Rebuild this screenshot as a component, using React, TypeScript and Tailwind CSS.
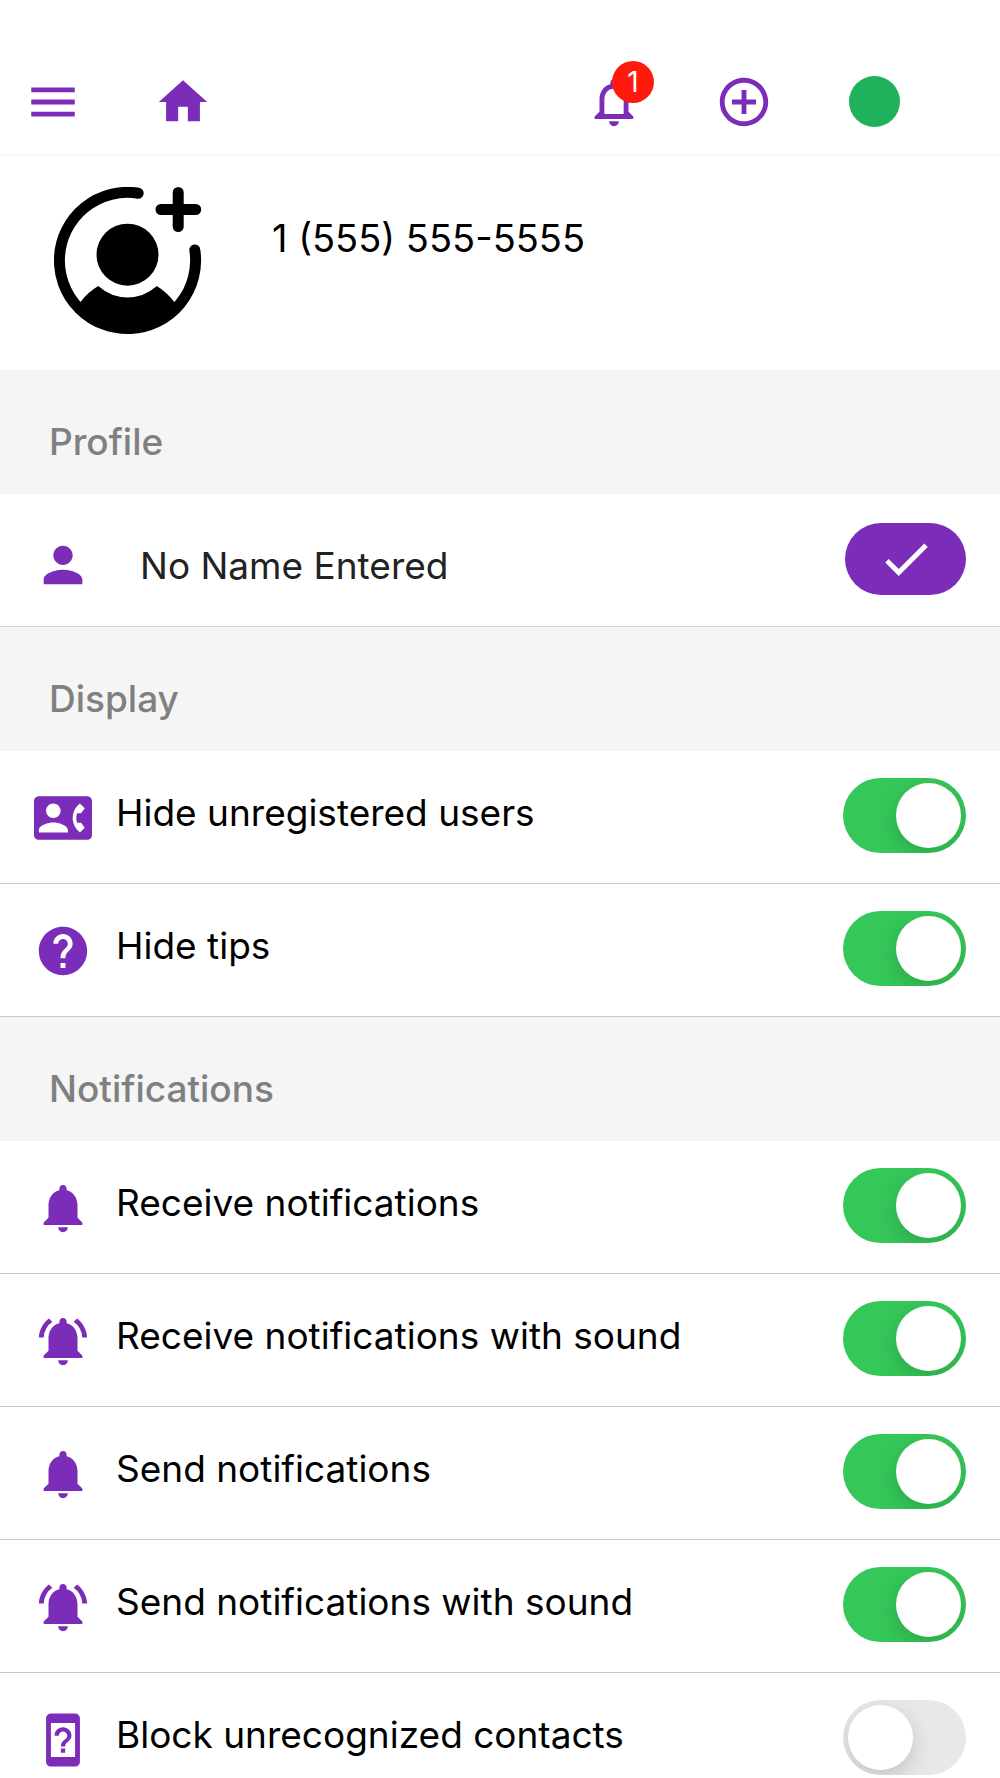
import { useState, type ReactNode } from "react";
import type { IconType } from "react-icons";
import {
  MdAddCircleOutline,
  MdCheck,
  MdContactPhone,
  MdDeviceUnknown,
  MdHelp,
  MdHome,
  MdMenu,
  MdNotifications,
  MdNotificationsActive,
  MdNotificationsNone,
  MdPerson,
} from "react-icons/md";

function AddAvatarIcon() {
  return (
    <svg viewBox="0 0 148 148" className="size-[148px]" aria-hidden="true">
      <g fill="none" stroke="#000" strokeWidth="11" strokeLinecap="round">
        <path d="M84.2 6.2A68.1 68.1 0 1 0 140.8 63" />
        <path d="M124.2 5.5v34M107 22.5h34.7" />
      </g>
      <circle cx="73.5" cy="67.7" r="31" />
      <path d="M26.5 114.9Q34 105 44.3 99Q57 110.4 73.5 110.4Q90 110.4 102.8 99Q112.5 105 120.3 114.9L124.5 118.5A68 68 0 0 1 22.5 118.5Z" />
    </svg>
  );
}

function SectionHeading({ children }: { children: ReactNode }) {
  return (
    <h2 className="flex h-[124px] items-center bg-[#f5f5f5] pt-5 pl-[49px] text-[37px] leading-[48px] font-medium text-[#808080]">
      {children}
    </h2>
  );
}

function SettingRow({ icon: Icon, label, initial }: { icon: IconType; label: string; initial: boolean }) {
  const [on, setOn] = useState(initial);
  return (
    <label className="flex h-[133px] items-center border-b border-[#c8c8cc] pr-[34px] pl-[34px]">
      <Icon className="mt-[2px] size-[58px] shrink-0 text-[#7b2cb8]" />
      <span className="ml-6 flex-1 pb-2 text-[37px] leading-[48px] text-black">{label}</span>
      <span className="relative mb-1 h-[75px] w-[123px] shrink-0">
        <input
          type="checkbox"
          role="switch"
          checked={on}
          onChange={(e) => setOn(e.target.checked)}
          className="peer block h-full w-full cursor-pointer appearance-none rounded-full bg-[#e8e8ea] checked:bg-[#35c759]"
        />
        <span className="pointer-events-none absolute inset-0 overflow-hidden rounded-full peer-checked:[&>span]:translate-x-[48px]">
          <span className="absolute top-[5px] left-[5px] size-[65px] rounded-full bg-white shadow-[0_8px_22px_rgba(0,0,0,0.16)]" />
        </span>
      </span>
    </label>
  );
}

const displaySettings = [
  { icon: MdContactPhone, label: "Hide unregistered users", initial: true },
  { icon: MdHelp, label: "Hide tips", initial: true },
];

const notificationSettings = [
  { icon: MdNotifications, label: "Receive notifications", initial: true },
  { icon: MdNotificationsActive, label: "Receive notifications with sound", initial: true },
  { icon: MdNotifications, label: "Send notifications", initial: true },
  { icon: MdNotificationsActive, label: "Send notifications with sound", initial: true },
  { icon: MdDeviceUnknown, label: "Block unrecognized contacts", initial: false },
];

export default function App() {
  return (
    <div className="flex h-screen flex-col bg-white font-['Inter','Liberation_Sans',sans-serif]">
      <header className="flex h-[156px] shrink-0 items-center justify-between border-b-2 border-[#f8f8f8] pt-[49px] pr-[97px] pl-6 text-[#7b2cb8]">
        <div className="flex gap-[72px]">
          <button type="button" aria-label="Menu">
            <MdMenu className="size-[58px]" />
          </button>
          <button type="button" aria-label="Home">
            <MdHome className="size-[58px]" />
          </button>
        </div>
        <div className="flex items-center gap-[72px]">
          <button type="button" aria-label="Alerts" className="relative">
            <MdNotificationsNone className="size-[58px]" />
            <span className="absolute -top-3 left-[27px] flex size-[42px] items-center justify-center rounded-full bg-[#ff1a0d] text-[28px] leading-none text-white">
              1
            </span>
          </button>
          <button type="button" aria-label="Add">
            <MdAddCircleOutline className="size-[58px]" />
          </button>
          <button type="button" aria-label="Status" className="flex size-[58px] items-center justify-center">
            <span className="size-[51px] rounded-full bg-[#1fb25a]" />
          </button>
        </div>
      </header>

      <main className="min-h-0 flex-1 overflow-y-auto [scrollbar-width:none]">
        <div className="flex h-[214px] items-start pt-[31px] pl-[54px]">
          <button type="button" aria-label="Add photo">
            <AddAvatarIcon />
          </button>
          <p className="mt-[27px] ml-[70px] text-[38px] leading-[48px] text-black">1 (555) 555-5555</p>
        </div>

        <SectionHeading>Profile</SectionHeading>
        <div className="flex h-[133px] items-center border-b border-[#d6d6d6] pr-[34px] pl-[34px]">
          <MdPerson className="mt-[10px] size-[58px] shrink-0 text-[#7b2cb8]" />
          <span className="mt-3 ml-12 flex-1 text-[37px] leading-[48px] text-[#222]">No Name Entered</span>
          <button
            type="button"
            aria-label="Save name"
            className="mb-[2px] flex h-[72px] w-[121px] items-center justify-center rounded-full bg-[#7b2cb8] text-white"
          >
            <MdCheck className="size-[58px]" />
          </button>
        </div>

        <SectionHeading>Display</SectionHeading>
        {displaySettings.map((s) => (
          <SettingRow key={s.label} {...s} />
        ))}

        <SectionHeading>Notifications</SectionHeading>
        {notificationSettings.map((s) => (
          <SettingRow key={s.label} {...s} />
        ))}
      </main>
    </div>
  );
}
